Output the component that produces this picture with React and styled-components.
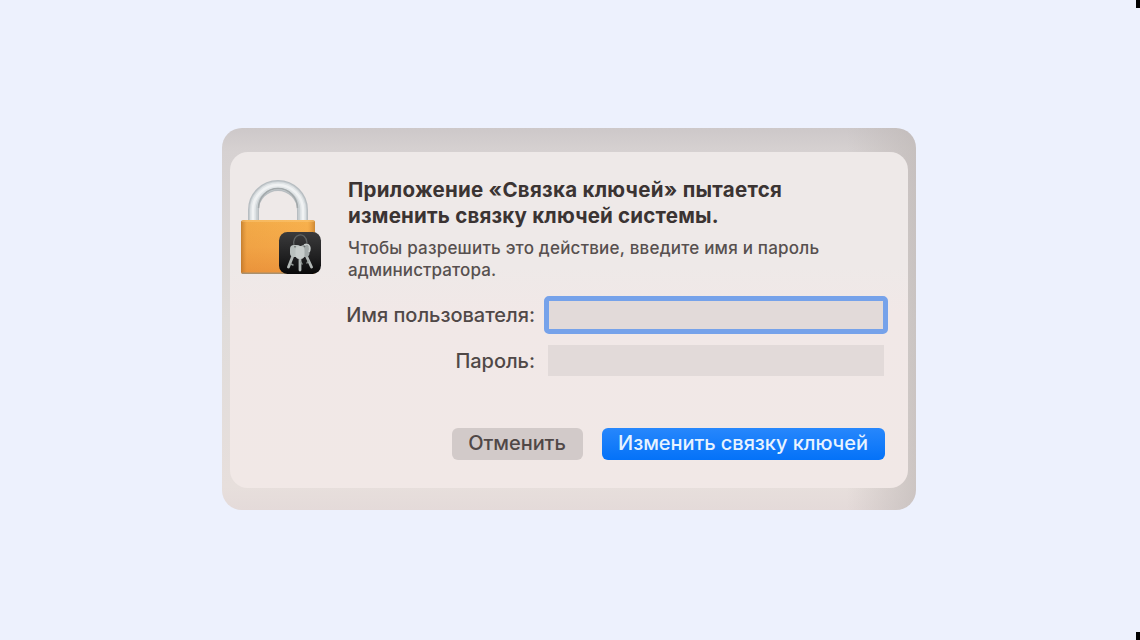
import React from 'react';
import styled, { createGlobalStyle } from 'styled-components';

const GlobalStyle = createGlobalStyle`
  * { box-sizing: border-box; }
  body { margin: 0; overflow: hidden; background: #edf1fd; font-family: Inter, Roboto, sans-serif; }
`;

const Page = styled.main`
  position: relative;
  width: 1140px;
  height: 640px;
  padding: 128px 0 0 222px;
  background: #edf1fd;
`;

const CornerMark = styled.i`
  position: absolute;
  right: 0;
  ${({ $edge }) => $edge}: 0;
  width: 4px;
  height: 8px;
  background: #000;
`;

const Frame = styled.section`
  width: 694px;
  height: 382px;
  padding: 24px 8px 22px;
  border-radius: 20px;
  background:
    linear-gradient(90deg, transparent 90%, rgba(190, 183, 181, 0.65) 100%),
    linear-gradient(180deg, #cdc8c9 0, #d6d1d1 6%, #e0dcda 50%, #e7dfdc 94%, #e4dad9 100%);
`;

const Dialog = styled.div`
  display: flex;
  height: 336px;
  border-radius: 18px;
  background: linear-gradient(180deg, #eee9e8 0, #eee9e8 34%, #f1e8e7 48%, #f1e8e6 100%);
`;

const IconColumn = styled.div`
  flex: 0 0 118px;
  padding: 24px 0 0 8px;
  svg { display: block; }
`;

const Body = styled.div`
  width: 540px;
  padding-top: 25px;
`;

const Title = styled.h1`
  margin: 0;
  color: #3b3433;
  font-size: 20.5px;
  font-weight: 700;
  line-height: 26px;
  white-space: nowrap;
`;

const Message = styled.p`
  margin: 8px 0 0;
  color: #57504f;
  font-size: 17px;
  font-weight: 500;
  line-height: 22px;
  white-space: nowrap;
`;

const Line = styled.span`
  display: block;
  letter-spacing: ${({ $track }) => $track || 0}px;
`;

const Form = styled.div`
  display: flex;
  flex-direction: column;
  gap: 8px;
  margin-top: 15px;
`;

const Field = styled.label`
  display: flex;
  align-items: center;
  height: 38px;
  color: #504847;
  font-size: 20px;
  font-weight: 500;
`;

const FieldName = styled.span`
  width: 187px;
  margin-right: 9px;
  display: flex;
  justify-content: flex-end;
  white-space: nowrap;
  letter-spacing: -0.03px;
`;

const Input = styled.input`
  width: ${({ $focused }) => ($focused ? 344 : 336)}px;
  height: ${({ $focused }) => ($focused ? 38 : 31)}px;
  margin: ${({ $focused }) => ($focused ? '0' : '0 0 2px 4px')};
  border: ${({ $focused }) => ($focused ? '5px solid #76a2ea' : '0')};
  border-radius: ${({ $focused }) => ($focused ? 5 : 0)}px;
  padding: 0 8px;
  outline: none;
  background: #e2dad9;
  font: inherit;
`;

const Actions = styled.div`
  display: flex;
  gap: 19px;
  margin: 48px 0 0 104px;
`;

const Button = styled.button`
  width: ${({ $primary }) => ($primary ? 283 : 131)}px;
  height: 32px;
  padding: 0 1px 2px 0;
  border: 0;
  border-radius: 6px;
  background: ${({ $primary }) => ($primary ? 'linear-gradient(#2787fc, #0472f8)' : '#d2cac9')};
  color: ${({ $primary }) => ($primary ? '#e8f3ff' : '#504847')};
  font: 500 20px Inter, Roboto, sans-serif;
  letter-spacing: -0.05px;
  white-space: nowrap;
`;

function Padlock() {
  return (
    <svg width="84" height="100" viewBox="0 0 84 100" aria-hidden="true">
      <defs>
        <linearGradient id="gold" x1="0" y1="0" x2="0" y2="1">
          <stop stopColor="#f7b14d" />
          <stop offset=".5" stopColor="#f5a849" />
          <stop offset="1" stopColor="#ed953d" />
        </linearGradient>
        <linearGradient id="side">
          <stop stopColor="#a96822" stopOpacity=".65" />
          <stop offset=".08" stopColor="#d4842c" stopOpacity=".15" />
          <stop offset=".9" stopColor="#d4842c" stopOpacity="0" />
          <stop offset="1" stopColor="#a96822" stopOpacity=".55" />
        </linearGradient>
        <linearGradient id="badge" x1="0" y1="0" x2="0" y2="1">
          <stop stopColor="#3b3b3c" />
          <stop offset=".6" stopColor="#202021" />
          <stop offset="1" stopColor="#080809" />
        </linearGradient>
      </defs>
      <g fill="none">
        <path d="M15.5 45V34A24.5 24.5 0 0 1 64.5 34V45" stroke="#b7bdc1" strokeWidth="11" />
        <path d="M15.5 45V34A24.5 24.5 0 0 1 64.5 34V45" stroke="#cbd1d4" strokeWidth="8.5" />
        <path d="M15 45V34A25 25 0 0 1 65 34V45" stroke="#e1e5e7" strokeWidth="5.5" />
        <path d="M15 45V34A25 25 0 0 1 65 34V45" stroke="#f0f2f3" strokeWidth="2.5" />
        <path d="M20.5 32A19.5 19.5 0 0 1 59.5 32" stroke="#a2a8aa" strokeWidth="1.5" />
      </g>
      <rect x="3" y="44" width="74" height="54" rx="2.5" fill="url(#gold)" />
      <rect x="3" y="44" width="74" height="54" rx="2.5" fill="url(#side)" />
      <path d="M4 45H76" stroke="#ffd185" opacity=".75" />
      <path d="M4 97.2H70" stroke="#a9906d" strokeWidth="1.5" />
      <rect x="41" y="56" width="42" height="42" rx="8.5" fill="url(#badge)" />
      <path d="M56 70C53 58 68 54 69 67" fill="none" stroke="#5f6363" strokeWidth="1.3" />
      <g strokeLinecap="round">
        <path d="M56 77L50.5 91M62 77V94M67 77L73.500 91" stroke="#b3b9b7" strokeWidth="2.8" />
        <path d="M53 88L55 89M63 86L64 88M70 85L69 87" stroke="#8e9592" strokeWidth="1.5" />
      </g>
      <rect x="52" y="69" width="11" height="12" rx="4" fill="#b9c0be" />
      <rect x="62" y="69" width="9.5" height="12" rx="4" fill="#a3aaa9" />
      <rect x="57.5" y="70" width="9" height="13" rx="4" fill="#c7cdcb" />
      <path d="M66 69C71 67 73 71 71 76" fill="none" stroke="#c7cdcb" strokeWidth="1.8" />
      <path d="M57 70V71.5M66 70L67 71" stroke="#6a6f6e" strokeWidth="1.5" />
    </svg>
  );
}

export default function App() {
  return (
    <>
      <GlobalStyle />
      <Page>
        <Frame>
          <Dialog role="dialog">
            <IconColumn><Padlock /></IconColumn>
            <Body>
              <Title>
                <Line $track={0.27}>Приложение «Связка ключей» пытается</Line>
                <Line $track={0.2}>изменить связку ключей системы.</Line>
              </Title>
              <Message>
                <Line $track={0.21}>Чтобы разрешить это действие, введите имя и пароль</Line>
                <Line $track={0.1}>администратора.</Line>
              </Message>
              <Form>
                <Field><FieldName>Имя пользователя:</FieldName><Input $focused /></Field>
                <Field><FieldName>Пароль:</FieldName><Input type="password" /></Field>
              </Form>
              <Actions>
                <Button>Отменить</Button>
                <Button $primary>Изменить связку ключей</Button>
              </Actions>
            </Body>
          </Dialog>
        </Frame>
        <CornerMark $edge="top" />
        <CornerMark $edge="bottom" />
      </Page>
    </>
  );
}
